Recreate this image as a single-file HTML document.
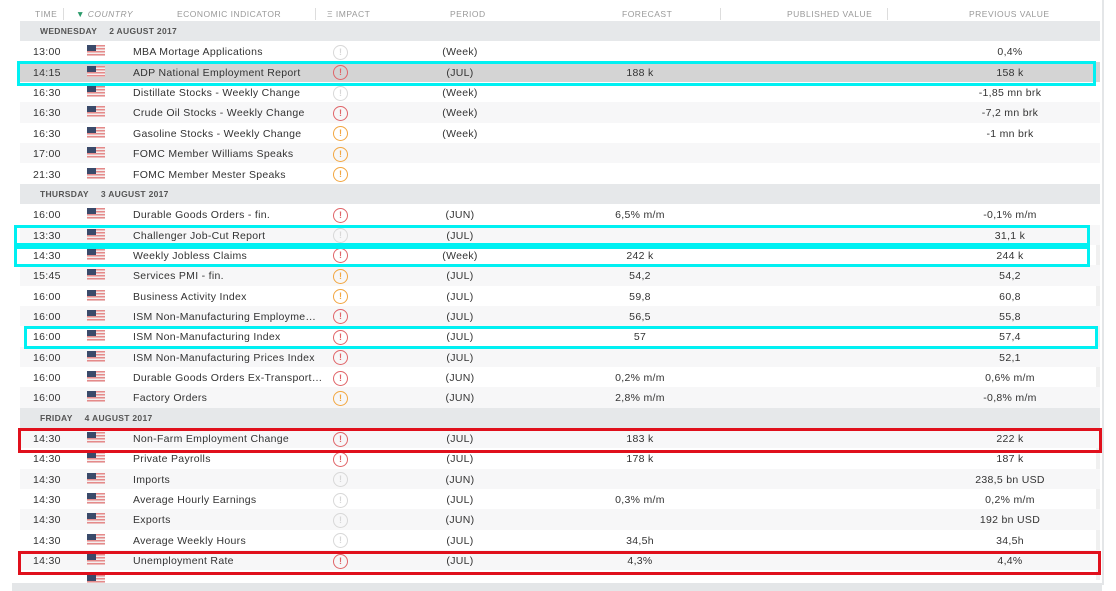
<!DOCTYPE html>
<html><head><meta charset="utf-8"><style>
*{margin:0;padding:0;box-sizing:border-box}
body{width:1116px;height:591px;background:#fff;position:relative;overflow:hidden;font-family:"Liberation Sans",sans-serif;font-size:10.5px;color:#333;letter-spacing:0.3px}
.r{position:absolute;left:20px;width:1080px;height:20.35px;line-height:20.35px}
.r.o{background:#f7f7f8}
.r.hl{background:#d4d4d4}
.r span{position:absolute;top:1px;white-space:nowrap}
.t{left:13px}
.n{left:113px}
.p{left:440px;width:0;text-align:center}
.p b,.f b,.v b{font-weight:normal;position:absolute;transform:translateX(-50%)}
.f{left:620px}
.v{left:990px}
.fl{position:absolute;left:67px;top:4px;width:18px;height:11px;background:repeating-linear-gradient(#e58a8a 0 1.5px,#f4eeee 1.5px 3px)}
.fl:before{content:"";position:absolute;left:0;top:0;width:9px;height:6px;background:#3a4a6a}
.r span.i{position:absolute;left:313px;top:3.5px;width:15px;height:15px;border:1.3px solid;border-radius:50%;font-size:9px;line-height:12.5px;text-align:center;font-weight:bold;font-style:normal;letter-spacing:0}
.R{color:#e06468;border-color:#e06468}
.G{color:#d8d8d8;border-color:#d8d8d8}
.O{color:#f2a640;border-color:#f2a640}
.d{position:absolute;left:20px;width:1080px;height:20.35px;line-height:21px;background:#e6e8ea;font-size:8.5px;font-weight:bold;color:#555}
.hd{position:absolute;top:0;height:22px;line-height:28px;font-size:8.5px;color:#999;letter-spacing:0.5px}
.box{position:absolute;border:3px solid #00f0f2}
.red{position:absolute;border:3px solid #e0101c}
</style></head><body>
<div class="hd" style="left:35px">TIME</div>
<div style="position:absolute;left:63px;top:8px;width:1px;height:12px;background:#ddd"></div>
<div class="hd" style="left:76px;font-style:italic"><span style="color:#2a9a6a">▼</span> COUNTRY</div>
<div class="hd" style="left:177px">ECONOMIC INDICATOR</div>
<div style="position:absolute;left:315px;top:8px;width:1px;height:12px;background:#ddd"></div>
<div class="hd" style="left:327px">Ξ IMPACT</div>
<div class="hd" style="left:450px">PERIOD</div>
<div class="hd" style="left:622px">FORECAST</div>
<div style="position:absolute;left:720px;top:8px;width:1px;height:12px;background:#ddd"></div>
<div class="hd" style="left:787px">PUBLISHED VALUE</div>
<div style="position:absolute;left:887px;top:8px;width:1px;height:12px;background:#ddd"></div>
<div class="hd" style="left:969px">PREVIOUS VALUE</div>
<div style="position:absolute;left:1102px;top:0;width:2px;height:585px;background:#e4e6e8"></div>
<div style="position:absolute;left:1096px;top:225px;width:4px;height:355px;background:#f0f0f0"></div>
<div style="position:absolute;left:12px;top:583px;width:1090px;height:8px;background:#e4e6e8"></div>

<div class="d" style="top:21px"><span style="margin-left:20px">WEDNESDAY</span><span style="margin-left:12px">2 AUGUST 2017</span></div>
<div class="r" style="top:41.4px"><span class="t">13:00</span><i class="fl"></i><span class="n">MBA Mortage Applications</span><span class="i G">!</span><span class="p"><b>(Week)</b></span><span class="v"><b>0,4%</b></span></div>
<div class="r hl" style="top:61.75px"><span class="t">14:15</span><i class="fl"></i><span class="n">ADP National Employment Report</span><span class="i R">!</span><span class="p"><b>(JUL)</b></span><span class="f"><b>188 k</b></span><span class="v"><b>158 k</b></span></div>
<div class="r" style="top:82.1px"><span class="t">16:30</span><i class="fl"></i><span class="n">Distillate Stocks - Weekly Change</span><span class="i G">!</span><span class="p"><b>(Week)</b></span><span class="v"><b>-1,85 mn brk</b></span></div>
<div class="r o" style="top:102.45px"><span class="t">16:30</span><i class="fl"></i><span class="n">Crude Oil Stocks - Weekly Change</span><span class="i R">!</span><span class="p"><b>(Week)</b></span><span class="v"><b>-7,2 mn brk</b></span></div>
<div class="r" style="top:122.8px"><span class="t">16:30</span><i class="fl"></i><span class="n">Gasoline Stocks - Weekly Change</span><span class="i O">!</span><span class="p"><b>(Week)</b></span><span class="v"><b>-1 mn brk</b></span></div>
<div class="r o" style="top:143.15px"><span class="t">17:00</span><i class="fl"></i><span class="n">FOMC Member Williams Speaks</span><span class="i O">!</span></div>
<div class="r" style="top:163.5px"><span class="t">21:30</span><i class="fl"></i><span class="n">FOMC Member Mester Speaks</span><span class="i O">!</span></div>

<div class="d" style="top:183.85px"><span style="margin-left:20px">THURSDAY</span><span style="margin-left:12px">3 AUGUST 2017</span></div>
<div class="r" style="top:204.2px"><span class="t">16:00</span><i class="fl"></i><span class="n">Durable Goods Orders - fin.</span><span class="i R">!</span><span class="p"><b>(JUN)</b></span><span class="f"><b>6,5% m/m</b></span><span class="v"><b>-0,1% m/m</b></span></div>
<div class="r o" style="top:224.55px"><span class="t">13:30</span><i class="fl"></i><span class="n">Challenger Job-Cut Report</span><span class="i G">!</span><span class="p"><b>(JUL)</b></span><span class="v"><b>31,1 k</b></span></div>
<div class="r" style="top:244.9px"><span class="t">14:30</span><i class="fl"></i><span class="n">Weekly Jobless Claims</span><span class="i R">!</span><span class="p"><b>(Week)</b></span><span class="f"><b>242 k</b></span><span class="v"><b>244 k</b></span></div>
<div class="r o" style="top:265.25px"><span class="t">15:45</span><i class="fl"></i><span class="n">Services PMI - fin.</span><span class="i O">!</span><span class="p"><b>(JUL)</b></span><span class="f"><b>54,2</b></span><span class="v"><b>54,2</b></span></div>
<div class="r" style="top:285.6px"><span class="t">16:00</span><i class="fl"></i><span class="n">Business Activity Index</span><span class="i O">!</span><span class="p"><b>(JUL)</b></span><span class="f"><b>59,8</b></span><span class="v"><b>60,8</b></span></div>
<div class="r o" style="top:305.95px"><span class="t">16:00</span><i class="fl"></i><span class="n">ISM Non-Manufacturing Employme…</span><span class="i R">!</span><span class="p"><b>(JUL)</b></span><span class="f"><b>56,5</b></span><span class="v"><b>55,8</b></span></div>
<div class="r" style="top:326.3px"><span class="t">16:00</span><i class="fl"></i><span class="n">ISM Non-Manufacturing Index</span><span class="i R">!</span><span class="p"><b>(JUL)</b></span><span class="f"><b>57</b></span><span class="v"><b>57,4</b></span></div>
<div class="r o" style="top:346.65px"><span class="t">16:00</span><i class="fl"></i><span class="n">ISM Non-Manufacturing Prices Index</span><span class="i R">!</span><span class="p"><b>(JUL)</b></span><span class="v"><b>52,1</b></span></div>
<div class="r" style="top:367px"><span class="t">16:00</span><i class="fl"></i><span class="n">Durable Goods Orders Ex-Transport…</span><span class="i R">!</span><span class="p"><b>(JUN)</b></span><span class="f"><b>0,2% m/m</b></span><span class="v"><b>0,6% m/m</b></span></div>
<div class="r o" style="top:387.35px"><span class="t">16:00</span><i class="fl"></i><span class="n">Factory Orders</span><span class="i O">!</span><span class="p"><b>(JUN)</b></span><span class="f"><b>2,8% m/m</b></span><span class="v"><b>-0,8% m/m</b></span></div>

<div class="d" style="top:407.7px"><span style="margin-left:20px">FRIDAY</span><span style="margin-left:12px">4 AUGUST 2017</span></div>
<div class="r o" style="top:428.05px"><span class="t">14:30</span><i class="fl"></i><span class="n">Non-Farm Employment Change</span><span class="i R">!</span><span class="p"><b>(JUL)</b></span><span class="f"><b>183 k</b></span><span class="v"><b>222 k</b></span></div>
<div class="r" style="top:448.4px"><span class="t">14:30</span><i class="fl"></i><span class="n">Private Payrolls</span><span class="i R">!</span><span class="p"><b>(JUL)</b></span><span class="f"><b>178 k</b></span><span class="v"><b>187 k</b></span></div>
<div class="r o" style="top:468.75px"><span class="t">14:30</span><i class="fl"></i><span class="n">Imports</span><span class="i G">!</span><span class="p"><b>(JUN)</b></span><span class="v"><b>238,5 bn USD</b></span></div>
<div class="r" style="top:489.1px"><span class="t">14:30</span><i class="fl"></i><span class="n">Average Hourly Earnings</span><span class="i G">!</span><span class="p"><b>(JUL)</b></span><span class="f"><b>0,3% m/m</b></span><span class="v"><b>0,2% m/m</b></span></div>
<div class="r o" style="top:509.45px"><span class="t">14:30</span><i class="fl"></i><span class="n">Exports</span><span class="i G">!</span><span class="p"><b>(JUN)</b></span><span class="v"><b>192 bn USD</b></span></div>
<div class="r" style="top:529.8px"><span class="t">14:30</span><i class="fl"></i><span class="n">Average Weekly Hours</span><span class="i G">!</span><span class="p"><b>(JUL)</b></span><span class="f"><b>34,5h</b></span><span class="v"><b>34,5h</b></span></div>
<div class="r o" style="top:550.15px"><span class="t">14:30</span><i class="fl"></i><span class="n">Unemployment Rate</span><span class="i R">!</span><span class="p"><b>(JUL)</b></span><span class="f"><b>4,3%</b></span><span class="v"><b>4,4%</b></span></div>
<div class="r" style="top:570.5px;height:12px;overflow:hidden"><i class="fl"></i></div>

<div class="box" style="left:17px;top:61px;width:1079px;height:25px"></div>
<div class="box" style="left:14px;top:225px;width:1076px;height:21px"></div>
<div class="box" style="left:14px;top:246px;width:1076px;height:21px"></div>
<div class="box" style="left:24px;top:326px;width:1074px;height:23px"></div>
<div class="red" style="left:18px;top:428px;width:1084px;height:25px"></div>
<div class="red" style="left:18px;top:551px;width:1083px;height:24px"></div>
</body></html>
